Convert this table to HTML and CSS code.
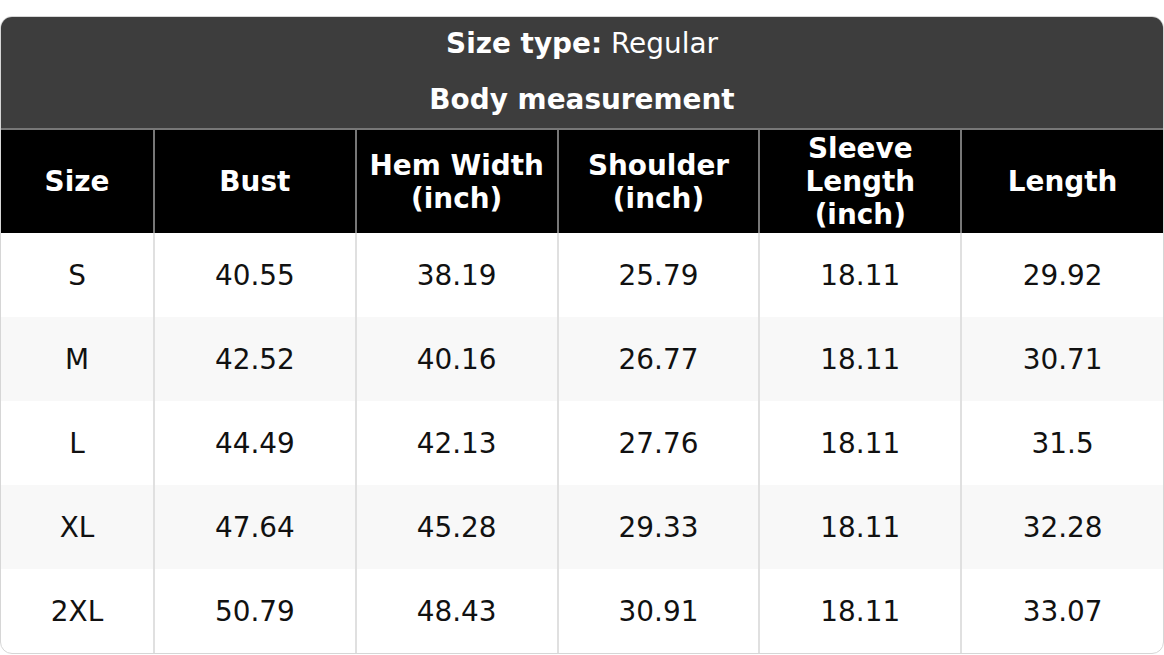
FILE: index.html
```html
<!DOCTYPE html>
<html>
<head>
<meta charset="utf-8">
<link rel="stylesheet" href="styles.css">
</head>
<body>
<div class="chart">
  <div class="banner">
    <div class="banner-line"><b>Size type:</b> Regular</div>
    <div class="banner-line"><b>Body measurement</b></div>
  </div>
  <table class="sizes">
    <colgroup>
      <col class="c-size"><col><col><col><col><col>
    </colgroup>
    <thead>
      <tr>
        <th>Size</th>
        <th>Bust</th>
        <th>Hem Width<br>(inch)</th>
        <th>Shoulder<br>(inch)</th>
        <th>Sleeve<br>Length<br>(inch)</th>
        <th>Length</th>
      </tr>
    </thead>
    <tbody>
      <tr><td>S</td><td>40.55</td><td>38.19</td><td>25.79</td><td>18.11</td><td>29.92</td></tr>
      <tr><td>M</td><td>42.52</td><td>40.16</td><td>26.77</td><td>18.11</td><td>30.71</td></tr>
      <tr><td>L</td><td>44.49</td><td>42.13</td><td>27.76</td><td>18.11</td><td>31.5</td></tr>
      <tr><td>XL</td><td>47.64</td><td>45.28</td><td>29.33</td><td>18.11</td><td>32.28</td></tr>
      <tr><td>2XL</td><td>50.79</td><td>48.43</td><td>30.91</td><td>18.11</td><td>33.07</td></tr>
    </tbody>
  </table>
</div>
</body>
</html>
```
FILE: styles.css
```css
html, body {
  margin: 0;
  padding: 0;
  background: #fff;
}
body {
  padding-top: 16px;
  font-family: "DejaVu Sans", sans-serif;
  font-size: 27.9px;
  color: #111;
}
.chart {
  width: 1164px;
  box-sizing: border-box;
  border: 1px solid #d6d6d6;
  border-radius: 12px;
  overflow: hidden;
  background: #fff;
}
.banner {
  background: #3d3d3d;
  color: #fff;
  text-align: center;
}
.banner-line {
  height: 56px;
  line-height: 56px;
}
.banner-line:first-child {
  height: 55px;
  line-height: 54px;
}
.sizes {
  width: 100%;
  border-collapse: collapse;
  table-layout: fixed;
}
.c-size {
  width: 153px;
}
.sizes th {
  background: #000;
  color: #fff;
  font-weight: bold;
  height: 104px;
  line-height: 33px;
  padding: 0;
  border-top: 2px solid #777;
  border-left: 2px solid #777;
  box-sizing: border-box;
}
.sizes th:first-child,
.sizes td:first-child {
  border-left: none;
}
.sizes td {
  height: 84px;
  padding: 0;
  text-align: center;
  border-left: 2px solid #e0e0e0;
  box-sizing: border-box;
}
.sizes tbody tr:nth-child(even) td {
  background: #f8f8f8;
}
```
